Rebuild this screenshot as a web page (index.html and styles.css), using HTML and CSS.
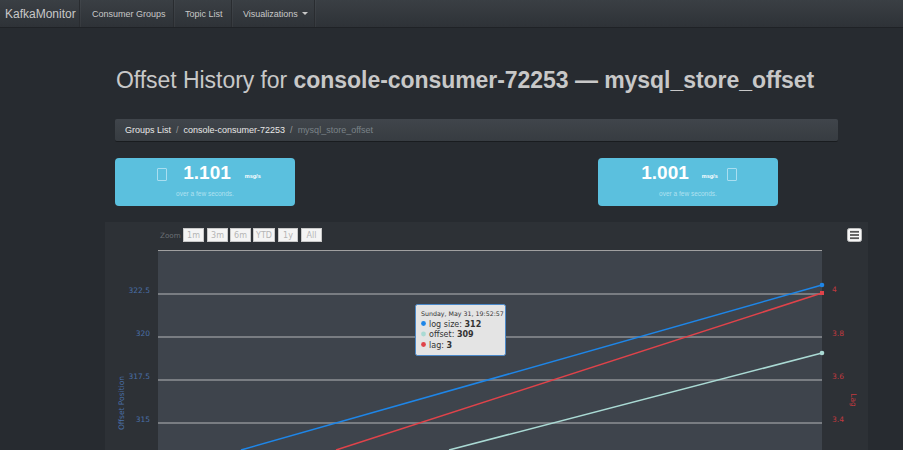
FILE: index.html
```html
<!DOCTYPE html>
<html>
<head>
<meta charset="utf-8">
<link rel="stylesheet" href="styles.css">
</head>
<body>
<nav class="navbar">
  <a class="brand">KafkaMonitor</a>
  <a class="nav-item item-groups">Consumer Groups</a>
  <a class="nav-item item-topics">Topic List</a>
  <a class="nav-item item-vis">Visualizations <span class="caret"></span></a>
</nav>
<main class="container">
  <h1 class="title">Offset History for <b>console-consumer-72253 — mysql_store_offset</b></h1>
  <div class="breadcrumb">
    <span class="crumb">Groups List</span><span class="sep">/</span><span class="crumb">console-consumer-72253</span><span class="sep">/</span><span class="crumb active">mysql_store_offset</span>
  </div>
  <div class="cards">
    <div class="card card-left">
      <div class="card-main"><span class="icon-box"></span><span class="num">1.101</span><span class="unit">msg/s</span></div>
      <div class="card-sub">over a few seconds.</div>
    </div>
    <div class="card card-right">
      <div class="card-main"><span class="num">1.001</span><span class="unit">msg/s</span><span class="icon-box"></span></div>
      <div class="card-sub">over a few seconds.</div>
    </div>
  </div>
</main>
<section class="chart-panel">
  <svg class="chart" width="763" height="240" viewBox="0 0 763 240">
    <rect x="53" y="28" width="664" height="220" fill="#3e444c"/>
    <line x1="53" y1="28.5" x2="717" y2="28.5" stroke="#a0a0a0" stroke-width="1"/>
    <g stroke="#8e9195" stroke-width="1.5">
      <line x1="53" y1="72" x2="717" y2="72"/>
      <line x1="53" y1="115" x2="717" y2="115"/>
      <line x1="53" y1="158" x2="717" y2="158"/>
      <line x1="53" y1="201" x2="717" y2="201"/>
    </g>
    <g font-family="'DejaVu Sans', sans-serif" font-size="7.5" fill="#4a70a8" text-anchor="end">
      <text x="45" y="71">322.5</text>
      <text x="45" y="114">320</text>
      <text x="45" y="157">317.5</text>
      <text x="45" y="200">315</text>
    </g>
    <text x="0" y="0" transform="translate(19,181) rotate(-90)" font-family="'DejaVu Sans', sans-serif" font-size="7.5" fill="#4a70a8" text-anchor="middle">Offset Position</text>
    <g font-family="'DejaVu Sans', sans-serif" font-size="7.5" fill="#c0393f">
      <text x="727" y="70">4</text>
      <text x="727" y="114">3.8</text>
      <text x="727" y="157">3.6</text>
      <text x="727" y="200">3.4</text>
    </g>
    <text x="0" y="0" transform="translate(746,178) rotate(90)" font-family="'DejaVu Sans', sans-serif" font-size="7.5" fill="#c0393f" text-anchor="middle">Lag</text>
    <line x1="136" y1="228" x2="717" y2="63" stroke="#1e86e8" stroke-width="1.5"/>
    <line x1="231" y1="228" x2="717" y2="71" stroke="#e0434a" stroke-width="1.5"/>
    <line x1="344" y1="228" x2="717" y2="131" stroke="#aadad4" stroke-width="1.5"/>
    <circle cx="717" cy="63" r="2.3" fill="#1e86e8"/>
    <rect x="715" y="69" width="4" height="4" fill="#e0434a"/>
    <circle cx="717" cy="131" r="2.3" fill="#aadad4"/>
    <g font-family="'DejaVu Sans', sans-serif">
      <text x="55" y="16" fill="#6c7075" font-size="7.2">Zoom</text>
      <g fill="#f4f4f4" stroke="#c8c8c8" stroke-width="1">
        <rect x="78.5" y="6.5" width="20" height="13"/>
        <rect x="102.5" y="6.5" width="20" height="13"/>
        <rect x="125.5" y="6.5" width="20" height="13"/>
        <rect x="148.5" y="6.5" width="21" height="13"/>
        <rect x="173.5" y="6.5" width="19" height="13"/>
        <rect x="196.5" y="6.5" width="20" height="13"/>
      </g>
      <g fill="#b4b4b4" text-anchor="middle" font-size="8">
        <text x="88.5" y="16">1m</text>
        <text x="112.5" y="16">3m</text>
        <text x="135.5" y="16">6m</text>
        <text x="159" y="16">YTD</text>
        <text x="183" y="16">1y</text>
        <text x="206.5" y="16">All</text>
      </g>
    </g>
    <g>
      <rect x="742.5" y="6.5" width="14" height="13" rx="2" fill="#f7f7f7" stroke="#bdbdbd"/>
      <g stroke="#555" stroke-width="1.8">
        <line x1="745" y1="9.8" x2="754" y2="9.8"/>
        <line x1="745" y1="13" x2="754" y2="13"/>
        <line x1="745" y1="16.2" x2="754" y2="16.2"/>
      </g>
    </g>
    <g font-family="'DejaVu Sans', sans-serif">
      <rect x="310.5" y="82.5" width="90" height="51" rx="2" fill="#e4e4e4" stroke="#4a88c8"/>
      <text x="316" y="94" font-size="6.3" fill="#333">Sunday, May 31, 19:52:57</text>
      <circle cx="318.5" cy="101.5" r="2.4" fill="#1e86e8"/>
      <text x="324" y="104.5" font-size="8" fill="#333">log size: <tspan font-weight="bold">312</tspan></text>
      <circle cx="318.5" cy="112" r="2.4" fill="#aadad4"/>
      <text x="324" y="115" font-size="8" fill="#333">offset: <tspan font-weight="bold">309</tspan></text>
      <circle cx="318.5" cy="122.5" r="2.4" fill="#e0434a"/>
      <text x="324" y="125.5" font-size="8" fill="#333">lag: <tspan font-weight="bold">3</tspan></text>
    </g>
  </svg>
</section>
</body>
</html>
```
FILE: styles.css
```css
html, body {
  margin: 0;
  padding: 0;
  background: #272b30;
  overflow: hidden;
  font-family: "Liberation Sans", Arial, sans-serif;
}
.navbar {
  height: 28px;
  display: flex;
  align-items: stretch;
  background: linear-gradient(#3a3f44, #2e3237);
  border-bottom: 1px solid #1f2226;
  box-sizing: border-box;
}
.brand, .nav-item {
  display: flex;
  align-items: center;
  box-sizing: border-box;
  color: #c8c8c8;
  text-decoration: none;
  border-right: 1px solid #292c30;
  box-shadow: 1px 0 0 rgba(255,255,255,0.04);
}
.brand {
  font-size: 12px;
  padding-left: 5px;
  width: 80px;
}
.nav-item {
  font-size: 9px;
  padding-left: 12px;
}
.item-groups { width: 94px; }
.item-topics { width: 58px; padding-left: 11px; }
.item-vis { width: 83px; padding-left: 11px; }
.caret {
  display: inline-block;
  width: 0;
  height: 0;
  margin-left: 4px;
  border-left: 3px solid transparent;
  border-right: 3px solid transparent;
  border-top: 3px solid #c8c8c8;
}
.container {
  margin-left: 115px;
  width: 723px;
}
.title {
  margin: 39px 0 0 1px;
  font-size: 23px;
  font-weight: normal;
  color: #c8c8c8;
  line-height: 26px;
  letter-spacing: -0.05px;
}
.title b {
  font-weight: bold;
}
.breadcrumb {
  margin-top: 26px;
  height: 22px;
  display: flex;
  align-items: center;
  padding: 0 10px;
  background: linear-gradient(#40454b, #373c41);
  border-radius: 2px;
  box-shadow: 0 1px 0 rgba(0,0,0,0.35);
  font-size: 9px;
  color: #e8e8e8;
}
.sep {
  color: #999;
  padding: 0 5px;
}
.crumb.active {
  color: #7a8288;
}
.cards {
  margin-top: 17px;
  display: flex;
  justify-content: space-between;
  padding-right: 60px;
}
.card {
  width: 180px;
  height: 48px;
  background: #5bc0de;
  border-radius: 4px;
  box-sizing: border-box;
  padding-top: 4px;
  display: flex;
  flex-direction: column;
  align-items: center;
}
.card-main {
  display: flex;
  align-items: center;
  height: 22px;
}
.icon-box {
  display: inline-block;
  width: 8px;
  height: 11px;
  border: 1px solid #a9def0;
  border-radius: 1px;
  margin-top: 2px;
}
.card-left .icon-box { margin-left: 8px; margin-right: 16px; }
.card-right .icon-box { margin-left: 9px; }
.card-right .card-main { margin-left: 2px; }
.num {
  color: #fff;
  font-weight: bold;
  font-size: 19px;
}
.unit {
  color: #fff;
  font-weight: bold;
  font-size: 5.5px;
  margin-top: 6px;
}
.card-left .unit { margin-left: 14px; }
.card-right .unit { margin-left: 13px; }
.card-sub {
  margin-top: 6px;
  font-size: 6.5px;
  color: #b0e0f0;
}
.chart-panel {
  margin: 16px 0 0 105px;
  width: 763px;
  height: 240px;
  background: #2d3136;
}
.chart {
  display: block;
}
```
